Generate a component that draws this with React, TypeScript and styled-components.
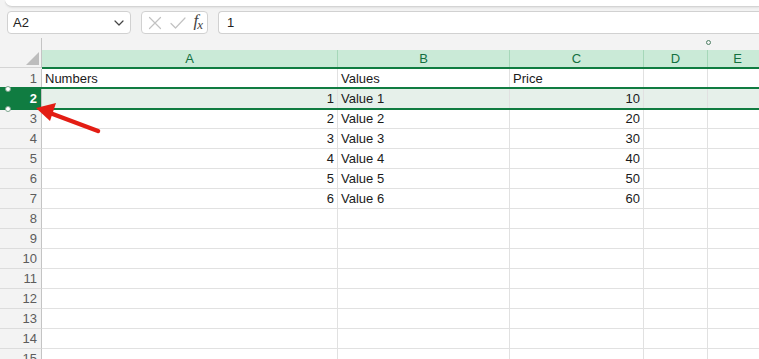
import styled, { createGlobalStyle } from "styled-components"

const GlobalStyle = createGlobalStyle`
	html, body {
		margin: 0;
		padding: 0;
	}
	body {
		font-family: "Liberation Sans", Arial, sans-serif;
	}
`

const GREEN = "#107c41"
const GRID = "#e1e1e1"

// column widths incl. right border
const COLS = [
	{ key: "A", width: 296 },
	{ key: "B", width: 172 },
	{ key: "C", width: 134 },
	{ key: "D", width: 64 },
	{ key: "E", width: 60 },
]

const ROWS: Array<[string, string, string]> = [
	["Numbers", "Values", "Price"],
	["1", "Value 1", "10"],
	["2", "Value 2", "20"],
	["3", "Value 3", "30"],
	["4", "Value 4", "40"],
	["5", "Value 5", "50"],
	["6", "Value 6", "60"],
]

const Window = styled.div`
	position: relative;
	width: 759px;
	height: 359px;
	overflow: hidden;
	background: #f3f3f3;
`

const TopStrip = styled.div`
	height: 6px;
	margin-left: 5px;
	background: #fff;
	border-bottom: 1px solid #d4d4d4;
	border-bottom-left-radius: 8px;
	box-shadow: 0 1px 2px rgba(0, 0, 0, 0.08);
`

const FormulaBar = styled.div`
	display: flex;
	align-items: center;
	gap: 10px;
	padding: 4px 0 0 7px;
	height: 23px;
`

const Box = styled.div`
	box-sizing: border-box;
	flex-shrink: 0;
	height: 23px;
	background: #fff;
	border: 1px solid #d1d1d1;
	border-radius: 4px;
	display: flex;
	align-items: center;
`

const NameBox = styled(Box)`
	width: 124px;
	padding: 0 6px 0 5px;
	justify-content: space-between;
	font-size: 13px;
	color: #222;
`

const FxButtons = styled(Box)`
	width: 67px;
	padding: 0 4px 0 6px;
	justify-content: space-between;
`

const FxLabel = styled.span`
	font-family: "Liberation Serif", "Times New Roman", serif;
	font-style: italic;
	font-size: 17px;
	line-height: 17px;
	color: #444;

	sub {
		font-size: 13px;
		vertical-align: -3px;
		margin-left: -1px;
	}
`

const FormulaInput = styled(Box)`
	flex: 1 1 auto;
	padding-left: 8px;
	border-right: none;
	border-top-right-radius: 0;
	border-bottom-right-radius: 0;
	font-size: 13px;
	color: #222;
`

const HeaderArea = styled.div`
	display: flex;
	margin-top: 1px;
`

const Corner = styled.div`
	position: relative;
	box-sizing: border-box;
	flex-shrink: 0;
	width: 42px;
	height: 30px;
	margin-top: 3px;
	border-right: 1px solid #c4c4c4;
	border-bottom: 1px solid #d4d4d4;
`

const CornerTriangle = styled.div`
	position: absolute;
	right: 2px;
	bottom: 2px;
	width: 0;
	height: 0;
	border-left: 13px solid transparent;
	border-bottom: 13px solid #bdbdbd;
`

const HeaderColumns = styled.div`
	display: flex;
	flex-direction: column;
	flex-shrink: 0;
`

const GroupStrip = styled.div`
	display: flex;
	height: 15px;
	align-items: center;
`

const GroupSlot = styled.div<{ $w: number }>`
	flex-shrink: 0;
	width: ${({ $w }) => $w}px;
	display: flex;
	justify-content: flex-end;
`

const GroupMark = styled.span`
	box-sizing: border-box;
	width: 5px;
	height: 5px;
	margin-right: -3px;
	margin-top: -1px;
	border: 1.5px solid #4f7f65;
	border-radius: 50%;
`

const ColHeaderRow = styled.div`
	display: flex;
	height: 17px;
	background: #caead7;
	border-bottom: 2px solid ${GREEN};
`

const ColHeader = styled.div<{ $w: number }>`
	box-sizing: border-box;
	flex-shrink: 0;
	width: ${({ $w }) => $w}px;
	border-right: 1px solid #a6d7b9;
	text-align: center;
	font-size: 13px;
	line-height: 18px;
	color: #13703f;
`

const Row = styled.div<{ $selected?: boolean }>`
	position: relative;
	display: flex;
	height: 20px;

	${({ $selected }) =>
		$selected &&
		`
		&::before, &::after {
			content: "";
			position: absolute;
			left: 0;
			right: 0;
			height: 2px;
			background: ${GREEN};
			z-index: 2;
		}
		&::before { top: -2px; }
		&::after { bottom: -1px; }
	`}
`

const RowHeader = styled.div<{ $selected?: boolean }>`
	box-sizing: border-box;
	flex-shrink: 0;
	width: 42px;
	padding-right: 4px;
	text-align: right;
	font-size: 13px;
	line-height: 20px;
	background: ${({ $selected }) => ($selected ? GREEN : "#f3f3f3")};
	color: ${({ $selected }) => ($selected ? "#fff" : "#5c5c5c")};
	font-weight: ${({ $selected }) => ($selected ? "bold" : "normal")};
	border-right: 1px solid #c4c4c4;
	border-bottom: 1px solid ${({ $selected }) => ($selected ? GREEN : "#dcdcdc")};
`

const Cell = styled.div<{ $w: number; $align?: "left" | "right"; $selected?: boolean }>`
	box-sizing: border-box;
	flex-shrink: 0;
	width: ${({ $w }) => $w}px;
	padding: 0 3px 0 3px;
	text-align: ${({ $align }) => $align ?? "left"};
	font-size: 13px;
	line-height: 20px;
	color: #1a1a1a;
	white-space: nowrap;
	overflow: hidden;
	background: ${({ $selected }) => ($selected ? "#e6f0ea" : "#fff")};
	border-right: 1px solid ${GRID};
	border-bottom: 1px solid ${GRID};
`

const Handle = styled.span<{ $top: number }>`
	position: absolute;
	left: 5px;
	top: ${({ $top }) => $top}px;
	width: 4px;
	height: 4px;
	border-radius: 50%;
	background: #fff;
	border: 1px solid #7da58e;
	z-index: 3;
`

const ArrowLayer = styled.svg`
	position: absolute;
	left: 0;
	top: 0;
	pointer-events: none;
	z-index: 5;
`

function Chevron() {
	return (
		<svg width="10" height="6" viewBox="0 0 10 6" fill="none">
			<path d="M1 1l4 4 4-4" stroke="#444" strokeWidth="1.2" strokeLinecap="round" strokeLinejoin="round" />
		</svg>
	)
}

function CancelIcon() {
	return (
		<svg width="14" height="14" viewBox="0 0 14 14" fill="none">
			<path d="M1.5 1.5l11 11M12.5 1.5l-11 11" stroke="#c2c2c2" strokeWidth="1.2" strokeLinecap="round" />
		</svg>
	)
}

function CheckIcon() {
	return (
		<svg width="16" height="12" viewBox="0 0 16 12" fill="none">
			<path d="M1 6.5l4.5 4.5L15 1" stroke="#c2c2c2" strokeWidth="1.2" strokeLinecap="round" strokeLinejoin="round" />
		</svg>
	)
}

export default function App() {
	const totalRows = 15

	return (
		<>
			<GlobalStyle />
			<Window>
				<TopStrip />
				<FormulaBar>
					<NameBox>
						<span>A2</span>
						<Chevron />
					</NameBox>
					<FxButtons>
						<CancelIcon />
						<CheckIcon />
						<FxLabel>
							f<sub>x</sub>
						</FxLabel>
					</FxButtons>
					<FormulaInput>1</FormulaInput>
				</FormulaBar>

				<HeaderArea>
					<Corner>
						<CornerTriangle />
					</Corner>
					<HeaderColumns>
						<GroupStrip>
							{COLS.map((c) => (
								<GroupSlot $w={c.width} key={c.key}>
									{c.key === "D" && <GroupMark />}
								</GroupSlot>
							))}
						</GroupStrip>
						<ColHeaderRow>
							{COLS.map((c) => (
								<ColHeader $w={c.width} key={c.key}>
									{c.key}
								</ColHeader>
							))}
						</ColHeaderRow>
					</HeaderColumns>
				</HeaderArea>

				{Array.from({ length: totalRows }, (_, i) => {
					const n = i + 1
					const data = ROWS[i]
					const selected = n === 2
					const isHeaderRow = n === 1
					return (
						<Row $selected={selected} key={n}>
							<RowHeader $selected={selected}>{n}</RowHeader>
							<Cell $align={isHeaderRow ? "left" : "right"} $selected={selected} $w={COLS[0].width}>
								{data?.[0]}
							</Cell>
							<Cell $selected={selected} $w={COLS[1].width}>
								{data?.[1]}
							</Cell>
							<Cell $align={isHeaderRow ? "left" : "right"} $selected={selected} $w={COLS[2].width}>
								{data?.[2]}
							</Cell>
							<Cell $selected={selected} $w={COLS[3].width} />
							<Cell $selected={selected} $w={COLS[4].width} />
						</Row>
					)
				})}

				<Handle $top={86} />
				<Handle $top={106} />

				<ArrowLayer width="759" height="359" viewBox="0 0 759 359">
					<line x1="98" y1="131" x2="50" y2="113" stroke="#e31d14" strokeWidth="4.5" strokeLinecap="round" />
					<polygon points="36,108 56,103 50,121" fill="#e31d14" />
				</ArrowLayer>
			</Window>
		</>
	)
}
